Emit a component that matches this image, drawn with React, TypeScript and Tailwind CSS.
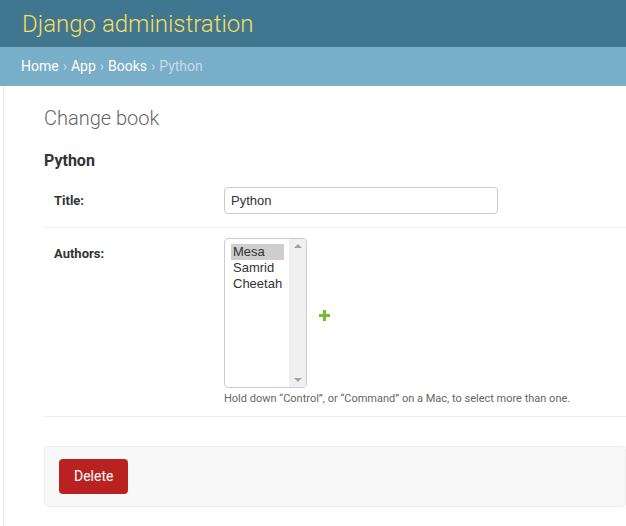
const authors = ["Mesa", "Samrid", "Cheetah"];

export default function App() {
  return (
    <div className="min-h-[526px] bg-white text-[#333] font-['Roboto',sans-serif]">
      {/* Header */}
      <div className="h-[47px] bg-[#417690] flex items-center px-[22px]">
        <h1 className="text-[24px] font-light text-[#f5dd5d] leading-none">
          Django administration
        </h1>
      </div>

      {/* Breadcrumbs */}
      <div className="h-[39px] bg-[#79aec8] flex items-center px-[21px] text-[14px] text-white">
        <span>Home</span>
        <span className="text-[#c4dce8] mx-[4px]">›</span>
        <span>App</span>
        <span className="text-[#c4dce8] mx-[4px]">›</span>
        <span>Books</span>
        <span className="text-[#c4dce8] mx-[4px]">›</span>
        <span className="text-[#c4dce8]">Python</span>
      </div>

      <div className="flex">
        <div className="w-[4px] border-r border-[#e8e8e8] min-h-[440px]" />

        <div className="flex-1 pl-[40px] pt-[20px]">
          <h1 className="text-[20px] font-light text-[#666] leading-[24px]">
            Change book
          </h1>
          <h2 className="mt-[21px] text-[16px] font-bold text-[#333] leading-[20px]">
            Python
          </h2>

          {/* Title row */}
          <div className="mt-[6px] flex pt-[10px] pb-[13px] border-b border-[#eee]">
            <label className="w-[180px] pl-[10px] text-[13px] font-bold text-[#333] flex items-center">
              Title:
            </label>
            <div className="w-[274px] h-[27px] border border-[#ccc] rounded-[4px] px-[6px] flex items-center text-[13px] text-[#333] font-['Liberation_Sans',sans-serif]">
              Python
            </div>
          </div>

          {/* Authors row */}
          <div className="flex pt-[10px] pb-[10px] border-b border-[#eee]">
            <label className="w-[180px] pl-[10px] text-[13px] font-bold text-[#333] pt-[6px]">
              Authors:
            </label>
            <div>
              <div className="flex items-center">
                <div className="w-[83px] h-[150px] border border-[#ccc] rounded-[4px] flex overflow-hidden">
                  <div className="flex-1 pl-[6px] pr-[5px] pt-[5px] text-[13px] leading-[16px] text-[#333] font-['Liberation_Sans',sans-serif]">
                    {authors.map((a, i) => (
                      <div key={a} className={i === 0 ? "bg-[#cecece] px-[2px]" : "px-[2px]"}>
                        {a}
                      </div>
                    ))}
                  </div>
                  <div className="w-[17px] bg-[#f0f0f0] flex flex-col justify-between items-center py-[5px]">
                    <div className="w-0 h-0 border-l-[4px] border-r-[4px] border-b-[4px] border-l-transparent border-r-transparent border-b-[#a3a3a3]" />
                    <div className="w-0 h-0 border-l-[4px] border-r-[4px] border-t-[4px] border-l-transparent border-r-transparent border-t-[#a3a3a3]" />
                  </div>
                </div>
                <svg className="ml-[12px] mt-[4px]" width="11" height="11" viewBox="0 0 11 11">
                  <path d="M4 0h3v4h4v3H7v4H4V7H0V4h4z" fill="#70bf2b" />
                </svg>
              </div>
              <p className="mt-[4px] text-[11px] text-[#666] leading-[14px]">
                Hold down “Control”, or “Command” on a Mac, to select more than one.
              </p>
            </div>
          </div>

          {/* Submit row */}
          <div className="mt-[29px] h-[61px] bg-[#f8f8f8] border border-[#eee] rounded-[4px] flex items-center px-[14px]">
            <button className="h-[35px] px-[15px] bg-[#ba2121] rounded-[4px] text-white text-[14px]">
              Delete
            </button>
          </div>
        </div>
      </div>
    </div>
  );
}
